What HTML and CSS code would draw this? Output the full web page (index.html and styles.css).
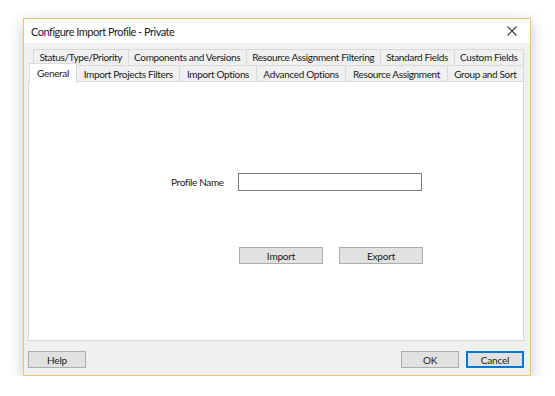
FILE: index.html
```html
<!DOCTYPE html>
<html lang="en">
<head>
    <meta charset="UTF-8">
    <title>Configure Import Profile - Private</title>
    <link rel="stylesheet" href="styles.css">
</head>
<body>
    <div class="window">
        <div class="titlebar">
            <span class="title">Configure Import Profile - Private</span>
            <button class="close-btn" title="Close">
                <svg width="10" height="10" viewBox="0 0 10 10">
                    <path d="M0.5 0.5 L9.5 9.5 M9.5 0.5 L0.5 9.5" stroke="#333" stroke-width="1.1" fill="none"/>
                </svg>
            </button>
        </div>

        <div class="client">
            <div class="tabs">
                <div class="tab-row row-back">
                    <div class="tab">Status/Type/Priority</div>
                    <div class="tab">Components and Versions</div>
                    <div class="tab">Resource Assignment Filtering</div>
                    <div class="tab">Standard Fields</div>
                    <div class="tab">Custom Fields</div>
                </div>
                <div class="tab-row row-front">
                    <div class="tab active">General</div>
                    <div class="tab">Import Projects Filters</div>
                    <div class="tab">Import Options</div>
                    <div class="tab">Advanced Options</div>
                    <div class="tab">Resource Assignment</div>
                    <div class="tab">Group and Sort</div>
                </div>
            </div>

            <div class="panel">
                <div class="field">
                    <label for="profileName">Profile Name</label>
                    <input type="text" id="profileName">
                </div>
                <div class="actions">
                    <button class="btn wide">Import</button>
                    <button class="btn wide">Export</button>
                </div>
            </div>

            <div class="footer">
                <button class="btn">Help</button>
                <div class="footer-right">
                    <button class="btn">OK</button>
                    <button class="btn default">Cancel</button>
                </div>
            </div>
        </div>
    </div>
</body>
</html>
```

FILE: styles.css
```css
* { margin: 0; padding: 0; box-sizing: border-box; font-family: Lato, 'Noto Sans', sans-serif; }
body { background: #ffffff; color: #000; }

.window {
    width: 508px;
    height: 358px;
    margin: 18px 0 0 23px;
    border: 1px solid #f3c46e;
    background: #f0f0f0;
    box-shadow: 0 4px 14px rgba(0, 0, 0, 0.22);
    display: flex;
    flex-direction: column;
}

.titlebar {
    height: 24px;
    background: #ffffff;
    display: flex;
    align-items: center;
    justify-content: space-between;
    padding-left: 7px;
}
.title { font-size: 11px; letter-spacing: -0.5px; color: #222; }
.close-btn {
    width: 28px;
    height: 24px;
    border: none;
    background: transparent;
    display: flex;
    align-items: center;
    justify-content: center;
    margin-right: 4px;
}

.client { flex: 1; display: flex; flex-direction: column; padding: 6px 6px 0 4px; }

.tabs { position: relative; height: 32px; }
.tab-row { display: flex; }
.tab {
    flex: auto;
    font-size: 10px;
    letter-spacing: -0.35px;
    color: #1a1a1a;
    text-align: center;
    white-space: nowrap;
    background: #f0f0f0;
    border: 1px solid #d9d9d9;
    border-right: none;
    padding: 0 3px;
}
.tab:last-child { border-right: 1px solid #d9d9d9; }
.row-back { margin-left: 5px; height: 16px; }
.row-back .tab { line-height: 15px; border-bottom: none; }
.row-front { margin-left: 3px; height: 17px; }
.row-front .tab { line-height: 16px; }
.tab.active {
    position: relative;
    z-index: 1;
    background: #ffffff;
    border-bottom-color: #ffffff;
    margin: -2px 0 -1px -2px;
    height: 20px;
    line-height: 18px;
    padding: 0 6px;
    flex: none;
    width: 48px;
    border-right: 1px solid #d9d9d9;
}
.tab.active + .tab { border-left: none; }

.panel {
    height: 260px;
    background: #ffffff;
    border: 1px solid #d9d9d9;
    padding: 91px 0 0 142px;
}
.field { display: flex; align-items: center; }
.field label { width: 67px; font-size: 10px; letter-spacing: -0.35px; color: #1a1a1a; }
.field input {
    width: 184px;
    height: 18px;
    border: 1px solid #7a7a7a;
    background: #fff;
}
.actions { display: flex; gap: 16px; margin: 56px 0 0 68px; }

.btn {
    width: 58px;
    height: 17px;
    font-size: 10px;
    letter-spacing: -0.2px;
    color: #1a1a1a;
    background: #e1e1e1;
    border: 1px solid #adadad;
}
.btn.wide { width: 84px; }
.btn.default { border: 1px solid #0078d7; box-shadow: inset 0 0 0 1px #0078d7; }

.footer { display: flex; justify-content: space-between; padding-top: 10px; }
.footer-right { display: flex; gap: 7px; }
```
